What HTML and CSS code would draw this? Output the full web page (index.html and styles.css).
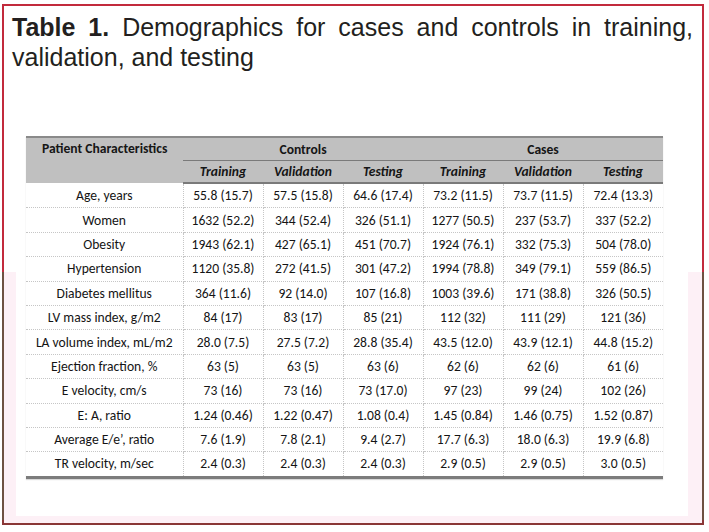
FILE: index.html
```html
<!DOCTYPE html>
<html>
<head>
<meta charset="utf-8">
<link rel="stylesheet" href="styles.css">
</head>
<body>
<div class="frame">
  <p class="title"><b>Table 1.</b> Demographics for cases and controls in training, validation, and testing</p>
  <table class="demo">
    <thead>
      <tr class="h1">
        <th class="pc" rowspan="2">Patient Characteristics</th>
        <th class="grp" colspan="3">Controls</th>
        <th class="grp" colspan="3">Cases</th>
      </tr>
      <tr class="h2">
        <th>Training</th><th>Validation</th><th>Testing</th>
        <th>Training</th><th>Validation</th><th>Testing</th>
      </tr>
    </thead>
    <tbody>
      <tr><td>Age, years</td><td>55.8 (15.7)</td><td>57.5 (15.8)</td><td>64.6 (17.4)</td><td>73.2 (11.5)</td><td>73.7 (11.5)</td><td>72.4 (13.3)</td></tr>
      <tr><td>Women</td><td>1632 (52.2)</td><td>344 (52.4)</td><td>326 (51.1)</td><td>1277 (50.5)</td><td>237 (53.7)</td><td>337 (52.2)</td></tr>
      <tr><td>Obesity</td><td>1943 (62.1)</td><td>427 (65.1)</td><td>451 (70.7)</td><td>1924 (76.1)</td><td>332 (75.3)</td><td>504 (78.0)</td></tr>
      <tr><td>Hypertension</td><td>1120 (35.8)</td><td>272 (41.5)</td><td>301 (47.2)</td><td>1994 (78.8)</td><td>349 (79.1)</td><td>559 (86.5)</td></tr>
      <tr><td>Diabetes mellitus</td><td>364 (11.6)</td><td>92 (14.0)</td><td>107 (16.8)</td><td>1003 (39.6)</td><td>171 (38.8)</td><td>326 (50.5)</td></tr>
      <tr><td>LV mass index, g/m2</td><td>84 (17)</td><td>83 (17)</td><td>85 (21)</td><td>112 (32)</td><td>111 (29)</td><td>121 (36)</td></tr>
      <tr><td>LA volume index, mL/m2</td><td>28.0 (7.5)</td><td>27.5 (7.2)</td><td>28.8 (35.4)</td><td>43.5 (12.0)</td><td>43.9 (12.1)</td><td>44.8 (15.2)</td></tr>
      <tr><td>Ejection fraction, %</td><td>63 (5)</td><td>63 (5)</td><td>63 (6)</td><td>62 (6)</td><td>62 (6)</td><td>61 (6)</td></tr>
      <tr><td>E velocity, cm/s</td><td>73 (16)</td><td>73 (16)</td><td>73 (17.0)</td><td>97 (23)</td><td>99 (24)</td><td>102 (26)</td></tr>
      <tr><td>E: A, ratio</td><td>1.24 (0.46)</td><td>1.22 (0.47)</td><td>1.08 (0.4)</td><td>1.45 (0.84)</td><td>1.46 (0.75)</td><td>1.52 (0.87)</td></tr>
      <tr><td>Average E/e’, ratio</td><td>7.6 (1.9)</td><td>7.8 (2.1)</td><td>9.4 (2.7)</td><td>17.7 (6.3)</td><td>18.0 (6.3)</td><td>19.9 (6.8)</td></tr>
      <tr><td>TR velocity, m/sec</td><td>2.4 (0.3)</td><td>2.4 (0.3)</td><td>2.4 (0.3)</td><td>2.9 (0.5)</td><td>2.9 (0.5)</td><td>3.0 (0.5)</td></tr>
    </tbody>
  </table>
</div>
</body>
</html>
```
FILE: styles.css
```css
html, body {
  margin: 0;
  padding: 0;
  background: #ffffff;
}

.frame {
  box-sizing: border-box;
  margin: 4px 0 0 2px;
  width: 702px;
  height: 521px;
  border: 2px solid #c22a3c;
  border-image: linear-gradient(to bottom, #c22a3c 0, #c22a3c 268px, #6e5142 268px, #6e5142 516px, #8a3636 516px) 2;
  box-shadow: 0 3px 0 #fde4ee;
  padding: 0 9px 0 8px;
  background:
    linear-gradient(#ffffff, #ffffff) 12px 266px / 672px 244px no-repeat,
    linear-gradient(#fdf0f6, #fdf0f6) 0 266px / 100% 251px no-repeat,
    #ffffff;
  background-origin: padding-box;
  overflow: hidden;
}

.title {
  margin: 6px 0 0 0;
  font-family: "Liberation Sans", Arial, sans-serif;
  font-size: 25px;
  line-height: 30px;
  color: #231f20;
  text-align: justify;
}

.demo {
  margin: 64px 0 0 14px;
  width: 637px;
  border-collapse: collapse;
  table-layout: fixed;
  font-family: "Carlito", "Lato", sans-serif;
  font-size: 13.6px;
  color: #141414;
  border-top: 2px solid #8a8a8a;
  border-bottom: 3px solid #7c7c7c;
  box-shadow: 0 1px 1px rgba(0, 0, 0, 0.15);
}

.demo th {
  background: #c0c0c0;
  font-weight: bold;
  padding: 0;
  color: #161616;
}

.demo .h1 th {
  height: 22px;
}

.demo .pc {
  width: 141px;
  text-align: left;
  vertical-align: top;
  padding: 2px 0 0 16px;
}

.demo .grp {
  border-bottom: 1px solid #7a7a7a;
  text-align: center;
}

.demo .h2 th {
  height: 21px;
  font-style: italic;
  text-align: center;
  border-bottom: 2px solid #7a7a7a;
}

.demo td {
  height: 23.4px;
  padding: 0;
  text-align: center;
  background: #ffffff;
  border: 1px dotted #c6c6c6;
  white-space: nowrap;
}

.demo tbody tr:first-child td {
  border-top: none;
}

.demo td:first-child {
  border-left: none;
}

.demo td:last-child {
  border-right: none;
}
```
